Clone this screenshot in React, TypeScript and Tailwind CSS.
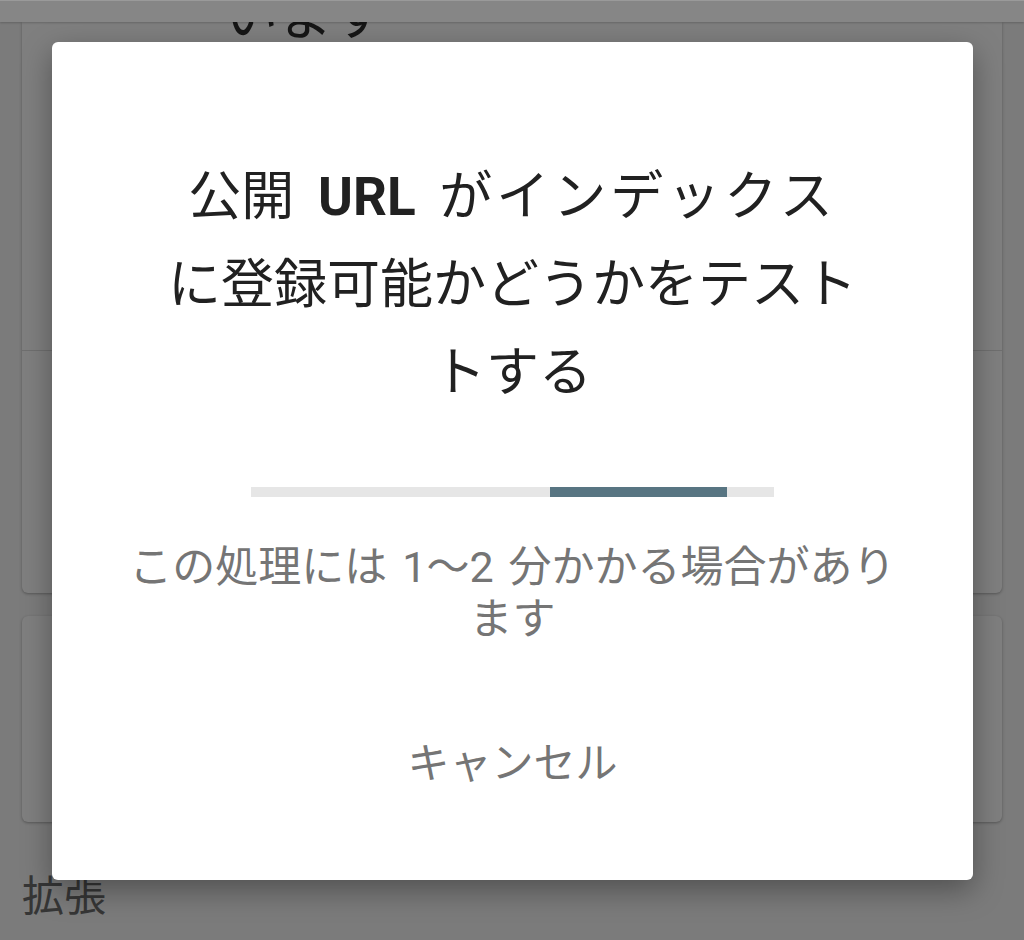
export default function App() {
  return (
    <div
      className="relative h-[940px] w-[1024px] overflow-hidden bg-[#7b7b7b]"
      style={{ fontFamily: "Roboto, 'Noto Sans CJK JP', sans-serif" }}
    >
      {/* app bar behind the scrim */}
      <div className="relative z-10 h-[22px] border-t border-[#9a9a9a] bg-[#868686] shadow-[0_1px_2px_rgba(0,0,0,0.2)]" />

      {/* page content behind the dialog */}
      <div className="px-[22px]">
        <div className="flow-root h-[571px] rounded-b-[6px] bg-[#7f7f7f] shadow-[0_1px_3px_rgba(0,0,0,0.3)]">
          <div className="flow-root h-[329px] border-b border-[#6f6f6f]">
            <p className="-mt-[32px] ml-[202px] text-[54px] leading-none text-[#161616]">います</p>
          </div>
        </div>
        <div className="mt-[23px] h-[206px] rounded-[6px] bg-[#7f7f7f] shadow-[0_1px_3px_rgba(0,0,0,0.3)]" />
        <p className="mt-[43px] text-[42px] leading-[63px] text-[#363636]">拡張</p>
      </div>

      {/* dialog */}
      <div className="absolute left-[52px] top-[42px] flex h-[838px] w-[921px] flex-col items-center rounded-[6px] bg-white pt-[111px] shadow-[0_10px_30px_rgba(0,0,0,0.35)]">
        <h1 className="text-center text-[53px] leading-[88px] font-normal text-[#212121] [word-spacing:0.2em]">
          公開 <span className="font-bold">URL</span> <span className="tracking-[4px]">がインデックス</span>
          <br />
          に登録可能かどうかをテスト
          <br />
          トする
        </h1>

        <div className="relative mt-[70px] h-[10px] w-[523px] bg-[#e6e6e6]">
          <div className="absolute left-[299px] top-0 h-full w-[177px] bg-[#587582]" />
        </div>

        <p className="mt-[44px] text-center text-[43px] leading-[52px] text-[#757575] [word-spacing:0.1em]">
          この処理には 1〜2 分かかる場合があり
          <br />
          ます
        </p>

        <button type="button" className="mt-[93px] text-[42px] leading-[52px] text-[#757575]">
          キャンセル
        </button>
      </div>
    </div>
  );
}
